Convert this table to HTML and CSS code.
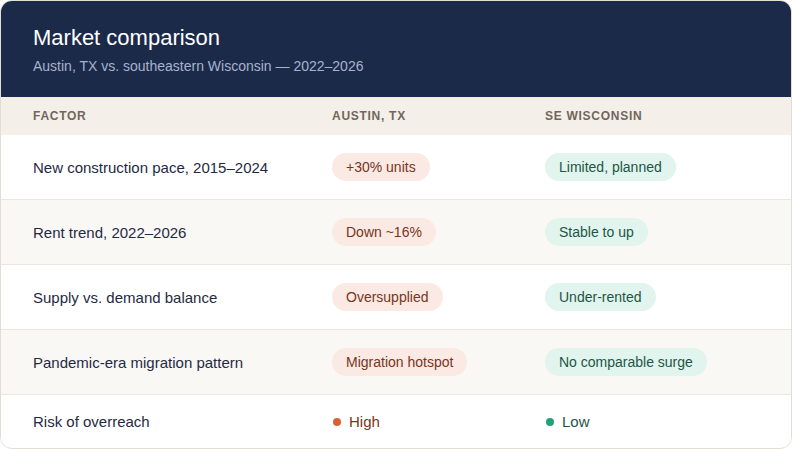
FILE: index.html
```html
<!DOCTYPE html>
<html lang="en">
<head>
<meta charset="utf-8">
<title>Market comparison</title>
<link rel="stylesheet" href="styles.css">
</head>
<body>
<div class="card">
  <div class="hero">
    <h1 class="title">Market comparison</h1>
    <p class="subtitle">Austin, TX vs. southeastern Wisconsin — 2022–2026</p>
  </div>
  <div class="row head">
    <div class="cell">Factor</div>
    <div class="cell">Austin, TX</div>
    <div class="cell">SE Wisconsin</div>
  </div>
  <div class="row">
    <div class="cell label">New construction pace, 2015–2024</div>
    <div class="cell"><span class="pill warm">+30% units</span></div>
    <div class="cell"><span class="pill cool">Limited, planned</span></div>
  </div>
  <div class="row alt">
    <div class="cell label">Rent trend, 2022–2026</div>
    <div class="cell"><span class="pill warm">Down ~16%</span></div>
    <div class="cell"><span class="pill cool">Stable to up</span></div>
  </div>
  <div class="row">
    <div class="cell label">Supply vs. demand balance</div>
    <div class="cell"><span class="pill warm">Oversupplied</span></div>
    <div class="cell"><span class="pill cool">Under-rented</span></div>
  </div>
  <div class="row alt">
    <div class="cell label">Pandemic-era migration pattern</div>
    <div class="cell"><span class="pill warm">Migration hotspot</span></div>
    <div class="cell"><span class="pill cool">No comparable surge</span></div>
  </div>
  <div class="row last">
    <div class="cell label">Risk of overreach</div>
    <div class="cell"><span class="dot-item warm-text"><span class="dot dot-warm"></span>High</span></div>
    <div class="cell"><span class="dot-item cool-text"><span class="dot dot-cool"></span>Low</span></div>
  </div>
</div>
</body>
</html>
```

FILE: styles.css
```css
* { box-sizing: border-box; }
html, body { margin: 0; padding: 0; background: #ffffff; }
body {
  font-family: "Liberation Sans", Arial, sans-serif;
  color: #1f2a44;
}
.card {
  width: 792px;
  height: 449px;
  border: 1px solid #e2ded6;
  border-radius: 12px;
  overflow: hidden;
  background: #ffffff;
}
.hero {
  background: #1c2a4a;
  height: 96px;
  padding: 24px 32px 0;
}
.title {
  margin: 0;
  font-size: 22px;
  font-weight: 400;
  line-height: 26px;
  color: #ffffff;
}
.subtitle {
  margin: 6px 0 0;
  font-size: 14px;
  line-height: 18px;
  color: #a7b3cc;
}
.row {
  display: grid;
  grid-template-columns: 299px 213px 1fr;
  align-items: center;
  height: 65px;
  border-bottom: 1px solid #ebe7e0;
  background: #ffffff;
}
.row.alt { background: #faf8f4; }
.row.last { border-bottom: none; height: 52px; }
.row.head {
  height: 38px;
  background: #f4efe8;
  border-bottom: none;
}
.head .cell {
  font-size: 12px;
  font-weight: 700;
  letter-spacing: 0.06em;
  text-transform: uppercase;
  color: #6f675d;
}
.cell { padding-left: 32px; }
.label { font-size: 15px; color: #1f2a44; }
.pill {
  display: inline-block;
  height: 28px;
  line-height: 28px;
  padding: 0 14px;
  border-radius: 14px;
  font-size: 14px;
}
.pill.warm { background: #fbeae4; color: #7a3420; }
.pill.cool { background: #e1f4ed; color: #1d5645; }
.dot-item {
  display: inline-flex;
  align-items: center;
  gap: 8px;
  font-size: 15px;
}
.warm-text { color: #7a3420; }
.cool-text { color: #1d5645; }
.dot {
  width: 8px;
  height: 8px;
  border-radius: 50%;
  margin-left: 1px;
}
.dot-warm { background: #d95f35; }
.dot-cool { background: #22a077; }
```
